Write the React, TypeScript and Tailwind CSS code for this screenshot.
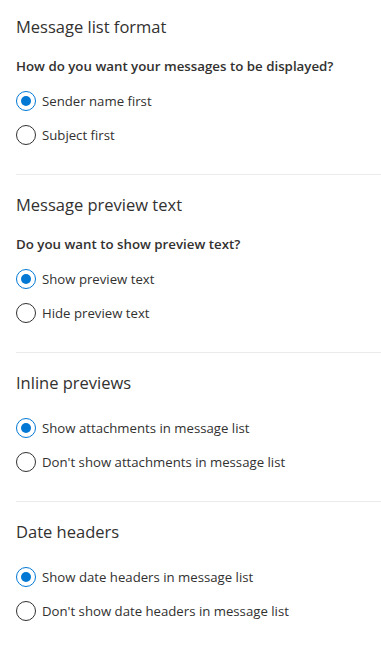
import { useState } from "react";

type Section = {
  title: string;
  question?: string;
  options: string[];
};

const sections: Section[] = [
  {
    title: "Message list format",
    question: "How do you want your messages to be displayed?",
    options: ["Sender name first", "Subject first"],
  },
  {
    title: "Message preview text",
    question: "Do you want to show preview text?",
    options: ["Show preview text", "Hide preview text"],
  },
  {
    title: "Inline previews",
    options: ["Show attachments in message list", "Don't show attachments in message list"],
  },
  {
    title: "Date headers",
    options: ["Show date headers in message list", "Don't show date headers in message list"],
  },
];

function Radio({ label, checked, onClick }: { label: string; checked: boolean; onClick: () => void }) {
  return (
    <button type="button" onClick={onClick} className="flex h-6 items-center gap-[6px] text-left">
      <span
        className={`flex h-5 w-5 shrink-0 items-center justify-center rounded-full border ${
          checked ? "border-[#0078d4]" : "border-[#323130]"
        }`}
      >
        {checked && <span className="h-[10px] w-[10px] rounded-full bg-[#0078d4]" />}
      </span>
      <span className="text-[13.2px] leading-5 text-[#323130]">{label}</span>
    </button>
  );
}

function SettingsSection({ section, last }: { section: Section; last: boolean }) {
  const [selected, setSelected] = useState(0);

  return (
    <div className={`ml-4 ${last ? "" : "border-b border-[#edebe9] pb-[27px]"}`}>
      <h2 className="text-[16.5px] leading-6 font-medium text-[#323130]">{section.title}</h2>
      {section.question && (
        <p className="mt-[17px] text-[13.3px] leading-5 font-semibold text-[#323130]">{section.question}</p>
      )}
      <div className={`flex flex-col gap-[10px] ${section.question ? "mt-[13px]" : "mt-[21px]"}`}>
        {section.options.map((opt, i) => (
          <Radio key={opt} label={opt} checked={selected === i} onClick={() => setSelected(i)} />
        ))}
      </div>
    </div>
  );
}

export default function App() {
  return (
    <div className="min-h-screen bg-white pt-[15px] font-['Segoe_UI','Open_Sans',sans-serif]">
      <div className="flex flex-col gap-[18px]">
        {sections.map((s, i) => (
          <SettingsSection key={s.title} section={s} last={i === sections.length - 1} />
        ))}
      </div>
    </div>
  );
}
